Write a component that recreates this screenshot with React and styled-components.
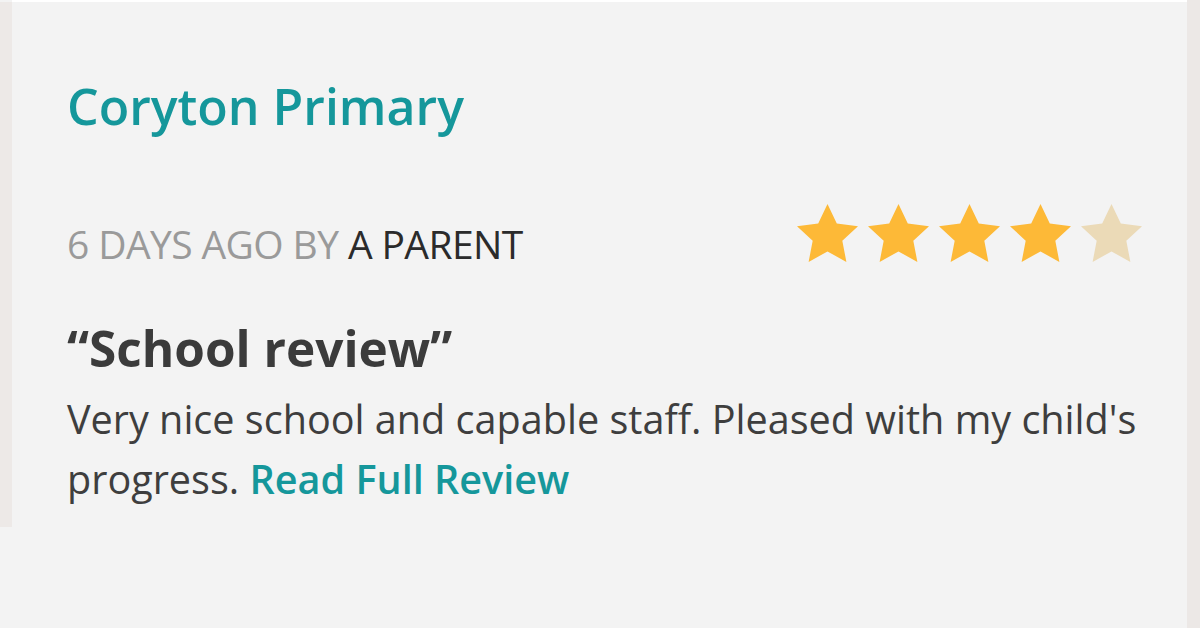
import styled, { createGlobalStyle } from "styled-components";

const GlobalStyle = createGlobalStyle`
    html, body {
        margin: 0;
        padding: 0;
        background: #f3f3f3;
    }
    body {
        font-family: "Open Sans", "Noto Sans", sans-serif;
    }
`

const review = {
    school: 'Coryton Primary',
    when: '6 days ago by',
    author: 'A Parent',
    rating: 4,
    title: 'School review',
    text: "Very nice school and capable staff. Pleased with my child's progress.",
}

function Star({ filled }) {
    return (
        <StarIcon viewBox="1.5 1.6 21 19.9" filled={filled ? 1 : 0}>
            <path d="M12 1.6l3.2 6.7 7.3.9-5.4 5 1.4 7.3L12 17.9l-6.5 3.6 1.4-7.3-5.4-5 7.3-.9z" />
        </StarIcon>
    )
}

export default function App() {
    return (
        <>
            <GlobalStyle />
            <Page>
                <LeftEdge />
                <Card>
                    <School>{review.school}</School>
                    <MetaRow>
                        <Meta>
                            {review.when} <Author>{review.author}</Author>
                        </Meta>
                        <Stars>
                            {[1, 2, 3, 4, 5].map((n) => <Star key={n} filled={n <= review.rating} />)}
                        </Stars>
                    </MetaRow>
                    <Title>“{review.title}”</Title>
                    <Body>
                        {review.text} <ReadMore href="#">Read Full Review</ReadMore>
                    </Body>
                </Card>
                <RightEdge />
            </Page>
        </>
    )
}

const Page = styled.div`
    display: flex;
    width: 1200px;
    height: 628px;
    background: #f3f3f3;
    overflow: hidden;
`

const LeftEdge = styled.div`
    width: 12px;
    height: 525px;
    margin-top: 2px;
    background: #ede9e7;
    flex-shrink: 0;
`

const RightEdge = styled.div`
    width: 13px;
    background: #ece8e6;
    flex-shrink: 0;
`

const Card = styled.div`
    flex: 1;
    border-top: 2px solid #ffffff;
    padding: 70px 45px 0 55px;
    color: #3a3a3a;
`

const School = styled.h1`
    margin: 0;
    font-size: 50px;
    font-weight: 600;
    color: #15979b;
    line-height: 68px;
`

const MetaRow = styled.div`
    display: flex;
    justify-content: space-between;
    align-items: flex-start;
    margin-top: 64px;
`

const Meta = styled.div`
    margin-top: 10px;
    font-size: 39px;
    line-height: 60px;
    text-transform: uppercase;
    color: #9a9a9a;
    letter-spacing: -0.6px;
`

const Author = styled.span`
    color: #2b2b2b;
`

const Stars = styled.div`
    display: flex;
    gap: 10px;
`

const StarIcon = styled.svg`
    width: 61px;
    height: 58px;
    fill: ${(props) => (props.filled ? '#fdb937' : '#ebdab7')};
`

const Title = styled.h2`
    margin: 44px 0 0;
    font-size: 49.5px;
    font-weight: 700;
    color: #3b3b3b;
    line-height: 60px;
`

const Body = styled.p`
    margin: 11px -20px 0 0;
    font-size: 39.6px;
    line-height: 60px;
    color: #3e3e3e;
`

const ReadMore = styled.a`
    color: #15979b;
    font-weight: 600;
    text-decoration: none;
`
